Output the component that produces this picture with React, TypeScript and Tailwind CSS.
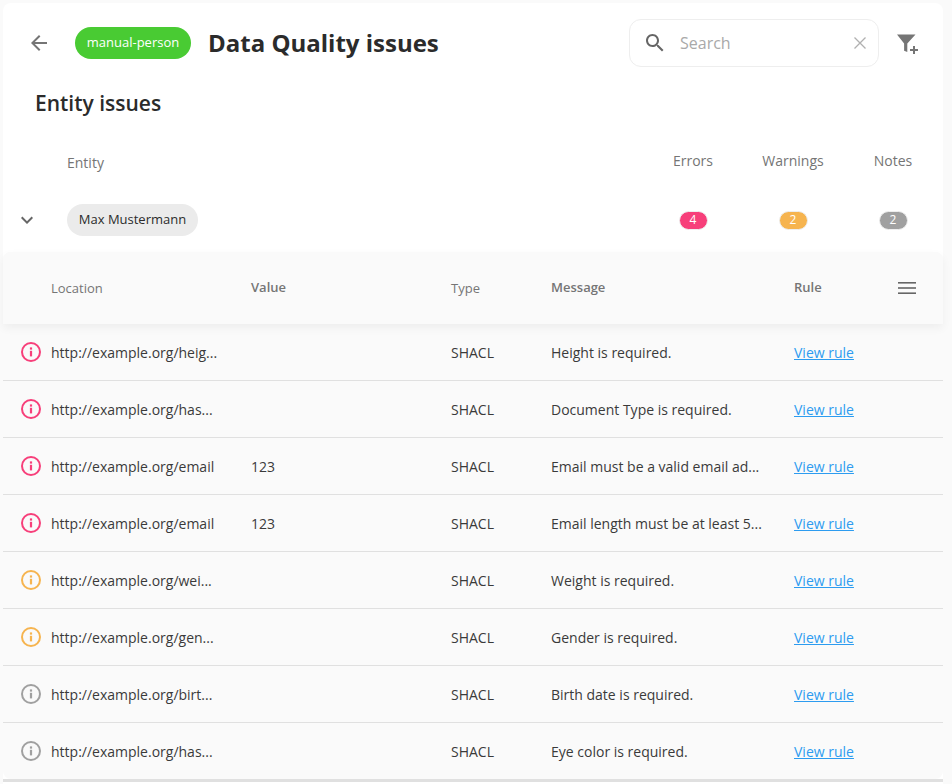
import * as React from 'react';

type Level = 'error' | 'warning' | 'note';

interface Issue {
  location: string;
  value: string;
  message: string;
  level: Level;
}

const issues: Issue[] = [
  { location: 'http://example.org/heig...', value: '', message: 'Height is required.', level: 'error' },
  { location: 'http://example.org/has...', value: '', message: 'Document Type is required.', level: 'error' },
  { location: 'http://example.org/email', value: '123', message: 'Email must be a valid email ad...', level: 'error' },
  { location: 'http://example.org/email', value: '123', message: 'Email length must be at least 5...', level: 'error' },
  { location: 'http://example.org/wei...', value: '', message: 'Weight is required.', level: 'warning' },
  { location: 'http://example.org/gen...', value: '', message: 'Gender is required.', level: 'warning' },
  { location: 'http://example.org/birt...', value: '', message: 'Birth date is required.', level: 'note' },
  { location: 'http://example.org/has...', value: '', message: 'Eye color is required.', level: 'note' },
];

const levelColor: Record<Level, string> = {
  error: 'text-[#f73f7a]',
  warning: 'text-[#f6b44f]',
  note: 'text-[#a0a0a0]',
};

const InfoIcon = ({ level }: { level: Level }) => (
  <svg viewBox="0 0 20 20" className={`w-5 h-5 ${levelColor[level]}`} fill="none">
    <circle cx="10" cy="10" r="9" stroke="currentColor" strokeWidth="2" />
    <rect x="8.9" y="8.8" width="2.2" height="5.6" fill="currentColor" />
    <rect x="8.9" y="5.4" width="2.2" height="2.2" fill="currentColor" />
  </svg>
);

const Count = ({ n, color }: { n: number; color: string }) => (
  <span className={`flex items-center justify-center w-[29px] h-[19px] rounded-full border border-[#eeeeee] text-white text-[12px] font-medium ${color}`}>
    {n}
  </span>
);

export default function App() {
  return (
    <div className="w-[952px] h-[784px] overflow-hidden bg-[#fafafa] pt-[3px] pl-[3px] font-['Open_Sans',sans-serif]">
      <div className="w-[940px] h-[781px] bg-white rounded-t-lg flex flex-col">
        <div className="flex items-center h-[80px] pl-[24px] shrink-0">
          <svg viewBox="0 0 24 24" className="w-6 h-6 text-[#757575]" fill="currentColor">
            <path d="M20 11H7.83l5.59-5.59L12 4l-8 8 8 8 1.41-1.41L7.83 13H20v-2z" />
          </svg>
          <span className="ml-[24px] flex items-center justify-center w-[116px] h-[32px] rounded-full bg-[#49cb33] text-white text-[13px]">
            manual-person
          </span>
          <h1 className="ml-[17px] text-[24px] font-bold text-[#2b2b2b] leading-none">Data Quality issues</h1>
          <div className="ml-auto flex items-center w-[250px] h-[48px] rounded-xl border border-[#eeeeee] pl-[13px] pr-[11px]">
            <svg viewBox="0 0 24 24" className="w-6 h-6 text-[#666666]" fill="currentColor">
              <path d="M15.5 14h-.79l-.28-.27C15.41 12.59 16 11.11 16 9.5 16 5.91 13.09 3 9.5 3S3 5.91 3 9.5 5.91 16 9.5 16c1.61 0 3.09-.59 4.23-1.57l.27.28v.79l5 4.99L20.49 19l-4.99-5zm-6 0C7.01 14 5 11.99 5 9.5S7.01 5 9.5 5 14 7.01 14 9.5 11.99 14 9.5 14z" />
            </svg>
            <span className="ml-[13px] text-[16px] text-[#a9a9a9]">Search</span>
            <svg viewBox="0 0 14 14" className="ml-auto w-[14px] h-[14px] text-[#b0b0b0]" fill="none" stroke="currentColor" strokeWidth="1.3">
              <path d="M1.5 1.5l11 11M12.5 1.5l-11 11" />
            </svg>
          </div>
          <svg viewBox="0 0 22 20" className="ml-[18px] mr-[24px] w-[22px] h-[20px] translate-y-[1px] text-[#757575]" fill="currentColor">
            <path d="M0 .5h18.5L10.3 9.5V18l-3.2-1.2V9.5z" />
            <path d="M16 12h2v3h3v2h-3v3h-2v-3h-3v-2h3z" />
          </svg>
        </div>

        <h2 className="pl-[32px] h-[42px] flex items-center text-[21px] font-semibold text-[#2b2b2b] shrink-0">Entity issues</h2>

        <div className="grid grid-cols-[64px_576px_100px_100px_100px] items-center text-[14px] text-[#757575] shrink-0 h-[63px] pt-[7px]">
          <span />
          <span className="translate-y-[2px]">Entity</span>
          <span className="text-center">Errors</span>
          <span className="text-center">Warnings</span>
          <span className="text-center">Notes</span>
        </div>

        <div className="grid grid-cols-[64px_576px_100px_100px_100px] items-center h-[64px] shrink-0">
          <svg viewBox="0 0 24 24" className="ml-[12px] w-6 h-6 text-[#666666]" fill="currentColor">
            <path d="M16.59 8.59L12 13.17 7.41 8.59 6 10l6 6 6-6z" />
          </svg>
          <span className="flex items-center justify-center w-[131px] h-[32px] rounded-full bg-[#ebebeb] text-[13px] text-[#2b2b2b]">
            Max Mustermann
          </span>
          <div className="flex justify-center"><Count n={4} color="bg-[#f73f7a]" /></div>
          <div className="flex justify-center"><Count n={2} color="bg-[#f6b44f]" /></div>
          <div className="flex justify-center"><Count n={2} color="bg-[#a0a0a0]" /></div>
        </div>

        <div className="bg-[#fafafa] rounded-lg shrink-0">
          <div className="relative grid grid-cols-[48px_200px_200px_100px_243px_1fr] items-center h-[72px] bg-[#fafafa] rounded-t-lg text-[13px] text-[#757575] shadow-[0_4px_10px_rgba(0,0,0,0.05)] pb-[1px]">
            <span />
            <span className="translate-y-[1px]">Location</span>
            <span className="font-semibold">Value</span>
            <span className="translate-y-[1px]">Type</span>
            <span className="font-semibold">Message</span>
            <div className="flex items-center justify-between pr-[27px]">
              <span className="font-semibold">Rule</span>
              <svg viewBox="0 0 18 12" className="w-[18px] h-[12px] text-[#666666]" fill="currentColor">
                <rect y="0" width="18" height="1.6" />
                <rect y="5.2" width="18" height="1.6" />
                <rect y="10.4" width="18" height="1.6" />
              </svg>
            </div>
          </div>
          {issues.map((issue, i) => (
            <div
              key={i}
              className="grid grid-cols-[48px_200px_200px_100px_243px_1fr] items-center h-[57px] border-b border-[#e0e0e0] last:h-[56px] last:border-b-0 text-[14px] text-[#3a3a3a]"
            >
              <div className="pl-[18px]"><InfoIcon level={issue.level} /></div>
              <span>{issue.location}</span>
              <span>{issue.value}</span>
              <span>SHACL</span>
              <span>{issue.message}</span>
              <a className="text-[#2d9cf0] underline">View rule</a>
            </div>
          ))}
        </div>
        <div className="h-[3px] bg-[#e0e0e0] shrink-0" />
      </div>
    </div>
  );
}
